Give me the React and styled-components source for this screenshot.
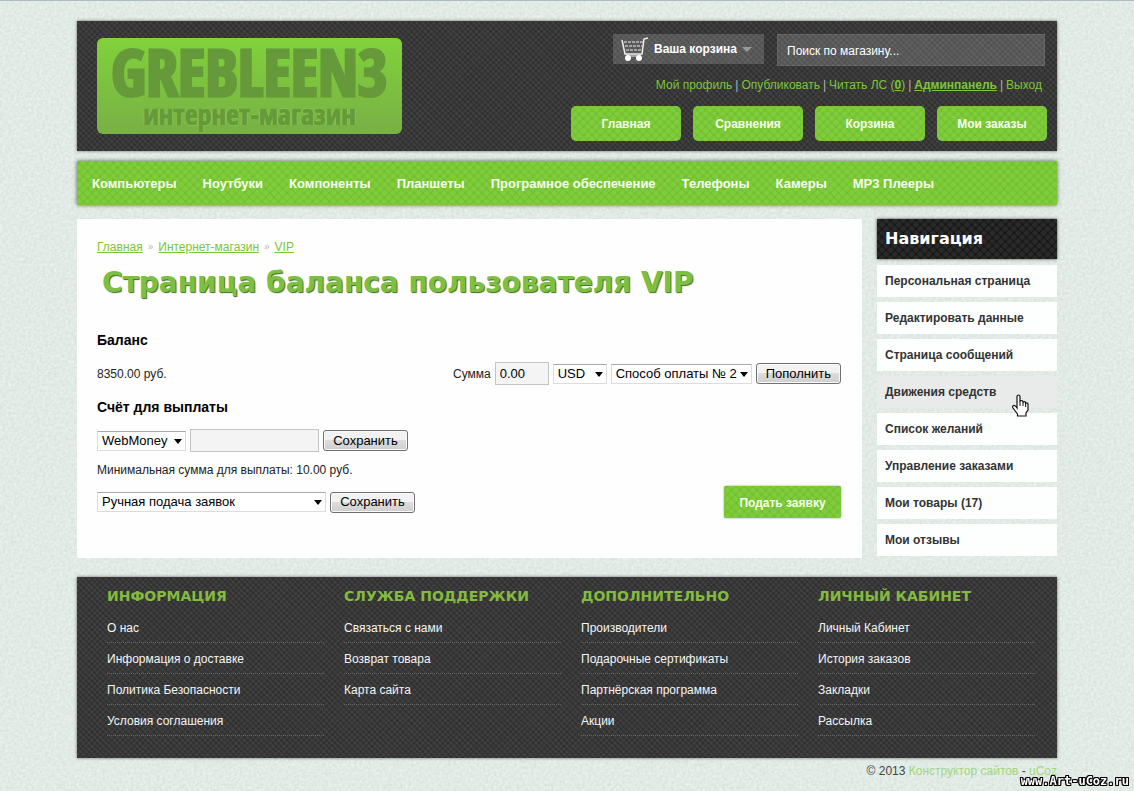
import React from "react";
import styled, { createGlobalStyle, css } from "styled-components";

const sans = '"Liberation Sans", Arial, sans-serif';
const wide = '"DejaVu Sans", Verdana, sans-serif';
const green = "#7ac736";

const GlobalStyle = createGlobalStyle`
  *, *::before, *::after { box-sizing: border-box; }
  body {
    margin: 0;
    background: #dae5df;
    font: 12px/20px ${sans};
    color: #222;
  }
  a { color: inherit; text-decoration: none; }
  h1, h2, h3, p, ul { margin: 0; padding: 0; }
  ul { list-style: none; }
`;

const darkWeave = css`
  background:
    repeating-linear-gradient(45deg, rgba(0, 0, 0, 0.16) 0 2px, transparent 2px 4px),
    repeating-linear-gradient(-45deg, rgba(0, 0, 0, 0.12) 0 2px, transparent 2px 4px),
    #414141;
`;

const greenWeave = css`
  background:
    repeating-linear-gradient(45deg, rgba(60, 130, 10, 0.1) 0 2px, transparent 2px 6px),
    repeating-linear-gradient(-45deg, rgba(60, 130, 10, 0.1) 0 2px, transparent 2px 6px),
    #80cd3c;
`;

const Grain = styled.svg`
  position: absolute;
  inset: 0;
  width: 100%;
  height: 100%;
  z-index: -1;
`;

const Page = styled.div`
  position: relative;
  z-index: 0;
  min-height: 100vh;
  padding: 20px 20px 0;
  border-top: 1px solid #aebbc2;
`;

const Container = styled.div`
  max-width: 980px;
  margin: 0 auto;
`;

const Header = styled.header`
  ${darkWeave}
  display: flex;
  justify-content: space-between;
  align-items: flex-start;
  min-height: 130px;
  padding: 13px 10px 10px 20px;
  box-shadow: 0 0 3px rgba(0, 0, 0, 0.55);
`;

const Logo = styled.a`
  display: flex;
  flex-direction: column;
  align-items: center;
  justify-content: center;
  width: 305px;
  height: 96px;
  margin-top: 4px;
  padding-bottom: 8px;
  border-radius: 6px;
  background: linear-gradient(#80d23a, #78b046);
  color: #66993a;
  font-family: Impact, "Open Sans Condensed", "Liberation Sans Narrow", sans-serif;
  font-weight: 700;
  text-shadow: 1px 0 #8fd754, -1px 0 #8fd754, 0 1px #8fd754, 0 -1px #8fd754;
`;

const LogoName = styled.span`
  font-size: 64px;
  line-height: 64px;
  -webkit-text-stroke: 3px #66993a;
`;

const LogoSub = styled.span`
  font-size: 28px;
  line-height: 20px;
  -webkit-text-stroke: 1px #66993a;
`;

const HeaderTools = styled.div`
  display: flex;
  flex-direction: column;
  align-items: flex-end;
`;

const ToolRow = styled.div`
  display: flex;
  gap: 13px;
  padding-right: 2px;
`;

const CartButton = styled.button`
  display: flex;
  align-items: center;
  gap: 5px;
  width: 151px;
  height: 30px;
  padding: 0 8px;
  border: 0;
  background: rgba(255, 255, 255, 0.17);
  color: #fff;
  font: bold 12px/20px ${sans};
`;

const Search = styled.input`
  width: 268px;
  height: 32px;
  padding: 2px 9px 0;
  border: 1px solid rgba(255, 255, 255, 0.08);
  background: rgba(255, 255, 255, 0.17);
  color: #fff;
  font: 12px/20px ${sans};
  &::placeholder { color: #fff; opacity: 1; }
`;

const UserLinks = styled.nav`
  display: flex;
  gap: 3px;
  padding: 9px 5px 11px 0;
  color: #b5b5b5;
  a { color: ${green}; }
  b { text-decoration: underline; }
`;

const ButtonRow = styled.div`
  display: flex;
  gap: 12px;
`;

const TopButton = styled.a`
  ${greenWeave}
  width: 110px;
  height: 35px;
  border-radius: 5px;
  color: #f4ffe8;
  font-weight: bold;
  line-height: 36px;
  text-align: center;
`;

const MainNav = styled.nav`
  ${greenWeave}
  display: flex;
  gap: 26px;
  min-height: 44px;
  margin: 10px 0 14px;
  padding: 1px 15px 0;
  box-shadow: 0 0 4px rgba(0, 0, 0, 0.6);
  a {
    color: #f4ffe8;
    font-size: 13px;
    font-weight: bold;
    line-height: 43px;
    white-space: nowrap;
  }
`;

const Columns = styled.div`
  display: grid;
  grid-template-columns: minmax(0, 1fr) 180px;
  gap: 15px;
  align-items: start;
`;

const Content = styled.main`
  padding: 20px 21px 40px 20px;
  background: #fefefe;
`;

const Crumbs = styled.nav`
  display: flex;
  gap: 5px;
  line-height: 16px;
  a { color: ${green}; text-decoration: underline; }
  span { color: #b8b8b8; font-size: 10px; }
`;

const Title = styled.h1`
  padding: 9px 0 29px 5px;
  color: #7bc043;
  font: bold 28px/37px ${wide};
  text-shadow: 1px 1px 1px #3f6b20;
`;

const SectionTitle = styled.h2`
  color: #000;
  font-size: 14px;
  line-height: 20px;
`;

const Row = styled.div`
  display: flex;
  justify-content: space-between;
  align-items: center;
  min-height: 22px;
  margin: ${(p) => (p.$tight ? "6px 0 0" : "12px 0")};
`;

const Fields = styled.form`
  display: flex;
  align-items: center;
  gap: 4px;
`;

const Note = styled.p`
  margin-top: -4px;
`;

const TextField = styled.input`
  width: ${(p) => p.$w}px;
  height: 23px;
  padding: 0 4px;
  border: 1px solid #c4c4c4;
  background: #f4f4f4;
  font: 13px/20px ${sans};
`;

const SelectBox = styled.span`
  position: relative;
  width: ${(p) => p.$w}px;
  &::after {
    content: "";
    position: absolute;
    top: 8px;
    right: 4px;
    border: 4px solid transparent;
    border-top: 5px solid #000;
    border-bottom: 0;
    pointer-events: none;
  }
  select {
    display: block;
    appearance: none;
    width: 100%;
    height: 20px;
    padding: 0 4px;
    border: 1px solid #dcdcdc;
    border-top-color: #a9a9a9;
    border-radius: 0;
    background: #fff;
    color: #000;
    font: 13px/18px ${sans};
  }
`;

const GreyButton = styled.button`
  min-width: 85px;
  height: 21px;
  padding: 0 9px;
  border: 1px solid #707070;
  border-radius: 3px;
  background: linear-gradient(#f2f2f2 45%, #dcdcdc 50%, #cfcfcf);
  box-shadow: inset 0 0 0 1px #fafafa;
  color: #000;
  font: 13px/18px ${sans};
`;

const SubmitButton = styled.button`
  ${greenWeave}
  width: 117px;
  height: 32px;
  padding: 2px 0 0;
  border: 0;
  border-radius: 2px;
  box-shadow: 0 0 2px rgba(0, 0, 0, 0.45);
  color: #f4ffe8;
  font: bold 12px/20px ${sans};
`;

const Sidebar = styled.aside`
  display: flex;
  flex-direction: column;
  gap: 5px;
  ul { display: contents; }
`;

const SideTitle = styled.h2`
  margin-bottom: 1px;
  padding: 0 8px;
  background:
    repeating-linear-gradient(45deg, rgba(0, 0, 0, 0.25) 0 2px, transparent 2px 6px),
    repeating-linear-gradient(-45deg, rgba(0, 0, 0, 0.25) 0 2px, transparent 2px 6px),
    #2a2a2a;
  box-shadow: 0 0 3px rgba(0, 0, 0, 0.7);
  color: #fff;
  font: bold 16px/40px ${wide};
`;

const SideItem = styled.li`
  position: relative;
  background: ${(p) => (p.$hovered ? "#e9ebea" : "#fdfffe")};
  a {
    display: block;
    padding: 0 8px;
    color: #333;
    font-weight: bold;
    line-height: 32px;
  }
`;

const Pointer = styled.svg`
  position: absolute;
  right: 28px;
  top: 18px;
  z-index: 1;
`;

const Footer = styled.footer`
  ${darkWeave}
  display: grid;
  grid-template-columns: repeat(4, minmax(0, 1fr));
  gap: 20px;
  min-height: 181px;
  margin-top: 19px;
  padding: 9px 22px 20px 30px;
  box-shadow: 0 0 3px rgba(0, 0, 0, 0.55);
`;

const FooterTitle = styled.h3`
  margin-bottom: 6px;
  color: #84bb3e;
  font: bold 14px/20px ${wide};
  white-space: nowrap;
`;

const FooterItem = styled.li`
  padding-top: 2px;
  border-bottom: 1px dotted #666;
  color: #f5f5f5;
  line-height: 28px;
`;

const Copyright = styled.p`
  color: #444;
  line-height: 26px;
  text-align: right;
  a { color: #a3d77c; }
`;

const Watermark = styled.div`
  position: fixed;
  right: 5px;
  bottom: 3px;
  color: #fff;
  font: bold 12px/14px "DejaVu Sans Mono", monospace;
  text-shadow: 1px 0 #000, -1px 0 #000, 0 1px #000, 0 -1px #000,
    1px 1px #000, -1px -1px #000, 1px -1px #000, -1px 1px #000;
`;

const CartIcon = () => (
  <svg width="28" height="26" viewBox="0 0 28 26" fill="none" stroke="#eee" aria-hidden="true">
    <path d="M1 4l3 14h17l2-15 4-1" strokeWidth="1.5" />
    <path d="M3 6h19M4 10h17M5 14h16" strokeDasharray="3 1" />
    <path d="M5 18l2 2h13" />
    <circle cx="7" cy="22" r="3" fill="#fff" stroke="none" />
    <circle cx="18" cy="22" r="3" fill="#fff" stroke="none" />
  </svg>
);

const CaretIcon = () => (
  <svg width="10" height="5" viewBox="0 0 10 5" aria-hidden="true">
    <path d="M0 0h10L5 5z" fill="#999" />
  </svg>
);

const HandIcon = () => (
  <Pointer width="17" height="23" viewBox="0 0 17 23" aria-hidden="true">
    <path
      d="M5 14V2.500Q5 1 6.500 1T8 2.500V8q0-1.500 1.500-1.500T11 8v1q0-1.300 1.300-1.300T13.600 9v1q0-1.200 1.200-1.200T16 10v6l-2 3v3H5.500v-2L1 14q-1-2 .5-2.500T5 14z"
      fill="#fff"
      stroke="#111"
      strokeWidth="1.200"
    />
    <path d="M8 8v4M11 9v3M13.600 10v3" stroke="#111" />
  </Pointer>
);

const topButtons = ["Главная", "Сравнения", "Корзина", "Мои заказы"];
const categories = [
  "Компьютеры", "Ноутбуки", "Компоненты", "Планшеты",
  "Програмное обеспечение", "Телефоны", "Камеры", "MP3 Плееры",
];
const sideLinks = [
  "Персональная страница", "Редактировать данные", "Страница сообщений", "Движения средств",
  "Список желаний", "Управление заказами", "Мои товары (17)", "Мои отзывы",
];
const footerColumns = [
  ["ИНФОРМАЦИЯ", ["О нас", "Информация о доставке", "Политика Безопасности", "Условия соглашения"]],
  ["СЛУЖБА ПОДДЕРЖКИ", ["Связаться с нами", "Возврат товара", "Карта сайта"]],
  ["ДОПОЛНИТЕЛЬНО", ["Производители", "Подарочные сертификаты", "Партнёрская программа", "Акции"]],
  ["ЛИЧНЫЙ КАБИНЕТ", ["Личный Кабинет", "История заказов", "Закладки", "Рассылка"]],
];

function Select({ label, width, option }) {
  return (
    <SelectBox $w={width}>
      <select aria-label={label} defaultValue={option}>
        <option>{option}</option>
      </select>
    </SelectBox>
  );
}

export default function App() {
  const stop = (e) => e.preventDefault();
  return (
    <Page>
      <GlobalStyle />
      <Grain aria-hidden="true">
        <filter id="grain">
          <feTurbulence type="fractalNoise" baseFrequency="0.35" numOctaves="2" />
          <feColorMatrix values="0 0 0 0 1  0 0 0 0 1  0 0 0 0 1  0.9 0 0 0 -0.25" />
        </filter>
        <rect width="100%" height="100%" filter="url(#grain)" />
      </Grain>
      <Container>
        <Header>
          <Logo href="#">
            <LogoName>GREBLEEN3</LogoName>
            <LogoSub>интернет-магазин</LogoSub>
          </Logo>
          <HeaderTools>
            <ToolRow>
              <CartButton type="button"><CartIcon />Ваша корзина<CaretIcon /></CartButton>
              <Search type="search" placeholder="Поиск по магазину..." aria-label="Поиск по магазину" />
            </ToolRow>
            <UserLinks>
              <a href="#">Мой профиль</a>|<a href="#">Опубликовать</a>|
              <a href="#">Читать ЛС (<b>0</b>)</a>|<a href="#"><b>Админпанель</b></a>|
              <a href="#">Выход</a>
            </UserLinks>
            <ButtonRow>
              {topButtons.map((t) => <TopButton href="#" key={t}>{t}</TopButton>)}
            </ButtonRow>
          </HeaderTools>
        </Header>
        <MainNav>
          {categories.map((t) => <a href="#" key={t}>{t}</a>)}
        </MainNav>
        <Columns>
          <Content>
            <Crumbs>
              <a href="#">Главная</a><span>»</span>
              <a href="#">Интернет-магазин</a><span>»</span>
              <a href="#">VIP</a>
            </Crumbs>
            <Title>Страница баланса пользователя VIP</Title>
            <SectionTitle>Баланс</SectionTitle>
            <Row>
              <span>8350.00 руб.</span>
              <Fields onSubmit={stop}>
                <label htmlFor="sum">Сумма</label>
                <TextField id="sum" $w={54} defaultValue="0.00" />
                <Select label="Валюта" width={54} option="USD" />
                <Select label="Способ оплаты" width={141} option="Способ оплаты № 2" />
                <GreyButton>Пополнить</GreyButton>
              </Fields>
            </Row>
            <SectionTitle>Счёт для выплаты</SectionTitle>
            <Row>
              <Fields onSubmit={stop}>
                <Select label="Система выплат" width={89} option="WebMoney" />
                <TextField $w={129} aria-label="Номер счёта" />
                <GreyButton>Сохранить</GreyButton>
              </Fields>
            </Row>
            <Note>Минимальная сумма для выплаты: 10.00 руб.</Note>
            <Row $tight>
              <Fields onSubmit={stop}>
                <Select label="Подача заявок" width={229} option="Ручная подача заявок" />
                <GreyButton>Сохранить</GreyButton>
              </Fields>
              <SubmitButton type="button">Подать заявку</SubmitButton>
            </Row>
          </Content>
          <Sidebar>
            <SideTitle>Навигация</SideTitle>
            <ul>
              {sideLinks.map((t, i) => (
                <SideItem key={t} $hovered={i === 3}>
                  <a href="#">{t}</a>
                  {i === 3 && <HandIcon />}
                </SideItem>
              ))}
            </ul>
          </Sidebar>
        </Columns>
        <Footer>
          {footerColumns.map(([title, links]) => (
            <section key={title}>
              <FooterTitle>{title}</FooterTitle>
              <ul>
                {links.map((t) => <FooterItem key={t}><a href="#">{t}</a></FooterItem>)}
              </ul>
            </section>
          ))}
        </Footer>
        <Copyright>
          © 2013 <a href="#">Конструктор сайтов</a> - <a href="#">uCoz</a>
        </Copyright>
      </Container>
      <Watermark>www.Art-uCoz.ru</Watermark>
    </Page>
  );
}
